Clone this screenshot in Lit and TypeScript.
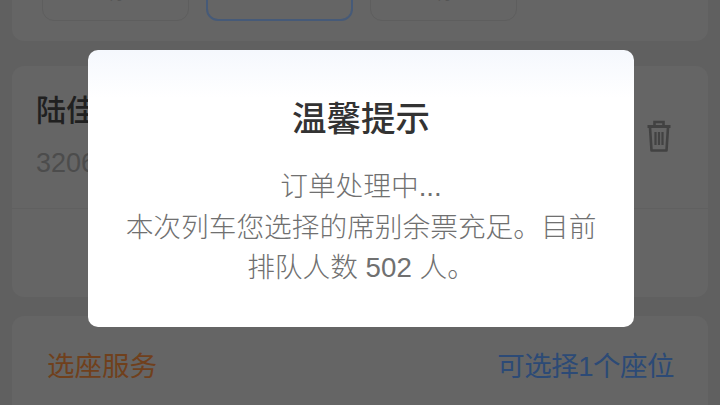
import { LitElement, html, css } from "lit";
import { customElement } from "lit/decorators.js";

@customElement("app-root")
export class AppRoot extends LitElement {
  static styles = css`
    :host {
      display: block;
      position: relative;
      width: 720px;
      height: 405px;
      overflow: hidden;
      background: #606060;
      font-family: "Liberation Sans", "Noto Sans CJK SC", sans-serif;
    }
    .page {
      display: flex;
      flex-direction: column;
      padding: 0 12px;
      margin-top: -40px;
    }
    .card {
      background: #656565;
      border-radius: 12px;
    }
    .seats {
      height: 81px;
      padding: 0 30px;
      display: flex;
      gap: 17px;
      box-sizing: border-box;
      margin-bottom: 25px;
    }
    .chip {
      box-sizing: border-box;
      width: 147px;
      height: 61px;
      border: 1px solid #5e5e5e;
      border-radius: 12px;
      display: flex;
      align-items: flex-end;
      justify-content: center;
      padding-bottom: 14px;
      color: #4a4a4a;
      font-size: 20px;
      line-height: 28px;
    }
    .chip.on {
      border: 2px solid #465a78;
    }
    .passenger {
      height: 231px;
      display: flex;
      flex-direction: column;
      margin-bottom: 19px;
    }
    .info {
      height: 142px;
      box-sizing: border-box;
      padding: 23px 37px 0 24px;
      display: flex;
      justify-content: space-between;
    }
    .name {
      font-size: 30px;
      line-height: 44px;
      font-weight: 500;
      color: #202020;
    }
    .id {
      font-size: 27px;
      line-height: 36px;
      margin-top: 12px;
      color: #4c4c4c;
    }
    .trash {
      width: 24px;
      height: 32px;
      margin-top: 31px;
      color: #424242;
    }
    .rule {
      height: 1px;
      background: #606060;
    }
    .service {
      height: 120px;
      box-sizing: border-box;
      padding: 31px 34px 0 35px;
      display: flex;
      justify-content: space-between;
      font-size: 27.5px;
      line-height: 40px;
    }
    .service .left {
      color: #70401c;
    }
    .service .right {
      color: #2c4a76;
      letter-spacing: -0.5px;
    }
    .scrim {
      position: absolute;
      inset: 0;
    }
    .dialog {
      position: absolute;
      left: 88px;
      top: 50px;
      width: 546px;
      height: 277px;
      box-sizing: border-box;
      border-radius: 10px;
      background: linear-gradient(180deg, #f5f8fd 0, #ffffff 48px);
      padding: 46px 20px 0;
      text-align: center;
    }
    .title {
      font-size: 34.5px;
      line-height: 46px;
      font-weight: 500;
      color: #333;
    }
    .body {
      margin-top: 25px;
      font-size: 27.7px;
      line-height: 40.5px;
      font-weight: 300;
      color: #707070;
    }
  `;

  render() {
    return html`
      <div class="page">
        <section class="card seats">
          <div class="chip">有</div>
          <div class="chip on">有</div>
          <div class="chip">有</div>
        </section>
        <section class="card passenger">
          <div class="info">
            <div>
              <div class="name">陆佳</div>
              <div class="id">3206</div>
            </div>
            <svg class="trash" viewBox="0 0 24 32" fill="none" stroke="currentColor" stroke-width="2.6">
              <path d="M7.500 5.500V2h9v3.500" />
              <path d="M.5 6.500h23" stroke-width="3" />
              <path d="M3 7.500 4.500 30.500h15L21 7.500" stroke-linejoin="round" />
              <path d="M8.500 12v13M12 12v13M15.500 12v13" stroke-width="2.200" />
            </svg>
          </div>
          <div class="rule"></div>
        </section>
        <section class="card service">
          <span class="left">选座服务</span>
          <span class="right">可选择1个座位</span>
        </section>
      </div>
      <div class="scrim">
        <div class="dialog">
          <div class="title">温馨提示</div>
          <div class="body">
            订单处理中...<br />本次列车您选择的席别余票充足。目前<br />排队人数 502 人。
          </div>
        </div>
      </div>
    `;
  }
}
